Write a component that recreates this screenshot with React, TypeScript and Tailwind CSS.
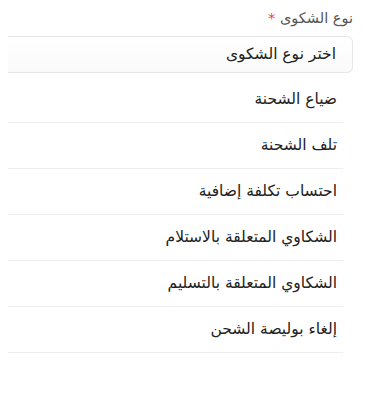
const options = [
  "ضياع الشحنة",
  "تلف الشحنة",
  "احتساب تكلفة إضافية",
  "الشكاوي المتعلقة بالاستلام",
  "الشكاوي المتعلقة بالتسليم",
  "إلغاء بوليصة الشحن",
]

export default function App() {
  return (
    <div dir="rtl" className="w-[373px] h-[403px] bg-white font-['DejaVu_Sans',sans-serif] text-[15.5px]">
      <div className="pr-[20px] pl-[8px] pt-[6px]">
        <label className="block h-[24px] leading-[24px] text-[14.5px] text-[#555]">
          نوع الشكوى <span className="text-[#e5484d]">*</span>
        </label>
        <div className="mt-[6px] h-[37px] flex items-center pr-[16px] border border-[#e6e6e6] border-l-0 rounded-r-[6px] bg-gradient-to-b from-white to-[#fafafa] text-[#222]">
          اختر نوع الشكوى
        </div>
        <ul className="mr-[10px] mt-[4px]">
          {options.map((o) => (
            <li
              key={o}
              className="h-[46px] flex items-center pr-[6px] border-b border-[#eeeeee] text-[#222]"
            >
              {o}
            </li>
          ))}
        </ul>
      </div>
    </div>
  )
}
